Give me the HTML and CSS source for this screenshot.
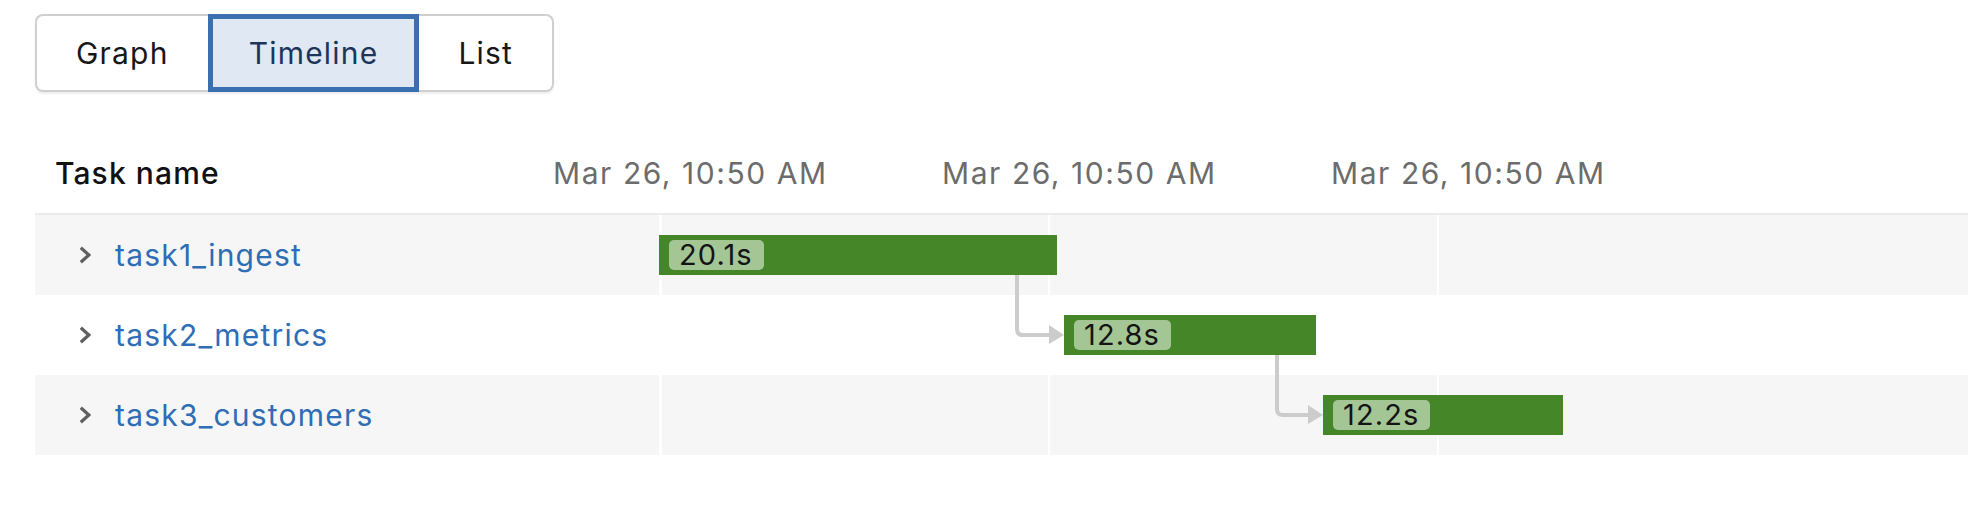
FILE: index.html
```html
<!DOCTYPE html>
<html lang="en">
<head>
<meta charset="utf-8">
<title>Timeline</title>
<link rel="stylesheet" href="styles.css">
</head>
<body>
<div class="page">
  <div class="tabs">
    <button class="tab">Graph</button>
    <button class="tab active">Timeline</button>
    <button class="tab">List</button>
  </div>

  <div class="gantt">
    <div class="gantt-head">
      <div class="head-name">Task name</div>
      <div class="tick">Mar 26, 10:50 AM</div>
      <div class="tick">Mar 26, 10:50 AM</div>
      <div class="tick">Mar 26, 10:50 AM</div>
    </div>

    <div class="gantt-body">
      <div class="row alt">
        <div class="name-cell">
          <svg class="chev" viewBox="0 0 12 18" width="12" height="18"><path d="M1.8 1.8 L9.8 9 L1.8 16.2"/></svg>
          <a class="task-link" href="#">task1_ingest</a>
        </div>
        <div class="track">
          <div class="cell"></div><div class="cell"></div><div class="cell"></div>
          <div class="bar" style="left:0px;width:398px"><span class="badge">20.1s</span></div>
        </div>
      </div>
      <div class="row">
        <div class="name-cell">
          <svg class="chev" viewBox="0 0 12 18" width="12" height="18"><path d="M1.8 1.8 L9.8 9 L1.8 16.2"/></svg>
          <a class="task-link" href="#">task2_metrics</a>
        </div>
        <div class="track">
          <div class="cell"></div><div class="cell"></div><div class="cell"></div>
          <div class="bar" style="left:405px;width:252px"><span class="badge">12.8s</span></div>
        </div>
      </div>
      <div class="row alt">
        <div class="name-cell">
          <svg class="chev" viewBox="0 0 12 18" width="12" height="18"><path d="M1.8 1.8 L9.8 9 L1.8 16.2"/></svg>
          <a class="task-link" href="#">task3_customers</a>
        </div>
        <div class="track">
          <div class="cell"></div><div class="cell"></div><div class="cell"></div>
          <div class="bar" style="left:664px;width:240px"><span class="badge">12.2s</span></div>
        </div>
      </div>

      <svg class="links" width="700" height="240" viewBox="0 0 700 240">
        <path class="link" d="M358 60 V114 Q358 120 364 120 H391"/>
        <polygon class="arrow" points="390,110 405,120 390,129"/>
        <path class="link" d="M618 140 V194 Q618 200 624 200 H650"/>
        <polygon class="arrow" points="649,190 664,200 649,209"/>
      </svg>
    </div>
  </div>
</div>
</body>
</html>
```

FILE: styles.css
```css
* {
  box-sizing: border-box;
}

body {
  margin: 0;
  background: #ffffff;
  font-family: Inter, "Noto Sans", "Liberation Sans", sans-serif;
  color: #161616;
  overflow: hidden;
}

.page {
  padding: 14px 0 0 35px;
}

/* ---------- segmented tabs ---------- */
.tabs {
  display: flex;
  width: max-content;
  height: 78px;
  border-radius: 8px;
  box-shadow: 0 2px 2px rgba(0, 0, 0, 0.07);
}

.tab {
  font: inherit;
  font-size: 30px;
  letter-spacing: 1.2px;
  height: 78px;
  padding: 0 39px;
  margin: 0;
  background: #ffffff;
  color: #171717;
  border-top: 2px solid #cfcfcf;
  border-bottom: 2px solid #cfcfcf;
  border-left: none;
  border-right: none;
  cursor: pointer;
}

.tab:first-child {
  border-left: 2px solid #cfcfcf;
  border-radius: 8px 0 0 8px;
}

.tab:last-child {
  border-right: 2px solid #cfcfcf;
  border-radius: 0 8px 8px 0;
}

.tab.active {
  border: 5px solid #3a70b0;
  background: #dfe8f3;
  color: #1b365a;
  padding: 0 36px;
}

/* ---------- gantt ---------- */
.gantt {
  font-size: 30px;
  letter-spacing: 1.2px;
}

.gantt-head {
  display: flex;
  padding-top: 63px;
  padding-bottom: 22px;
  line-height: 36px;
  border-bottom: 2px solid #ebebeb;
  white-space: nowrap;
}

.head-name {
  flex: none;
  width: 518px;
  padding-left: 20px;
  font-weight: 500;
  letter-spacing: 1.1px;
  color: #111111;
}

.tick {
  flex: none;
  width: 389px;
  color: #6c6c6c;
  letter-spacing: 1.55px;
}

.gantt-body {
  position: relative;
}

.row {
  display: flex;
  height: 80px;
  background: #ffffff;
}

.row.alt {
  background: #f6f6f6;
}

.name-cell {
  flex: none;
  width: 624px;
  display: flex;
  align-items: center;
  padding-left: 44px;
  gap: 24px;
}

.chev {
  flex: none;
}

.chev path {
  fill: none;
  stroke: #5f5f5f;
  stroke-width: 3.2;
  stroke-linecap: butt;
  stroke-linejoin: miter;
}

.task-link {
  color: #2f6db4;
  text-decoration: none;
  line-height: 36px;
}

.track {
  flex: 1;
  position: relative;
  display: flex;
  overflow: hidden;
}

.cell {
  flex: none;
  width: 389px;
  border-left: 2px solid #ffffff;
}

.cell:first-child {
  border-left-width: 3px;
}

.cell:last-of-type {
  flex: 1;
}

.bar {
  position: absolute;
  top: 20px;
  height: 40px;
  background: #458628;
  display: flex;
  align-items: center;
  padding-left: 10px;
}

.badge {
  display: block;
  height: 30px;
  line-height: 30px;
  padding: 0 11px 0 10px;
  border-radius: 5px;
  background: #a3c694;
  color: #141414;
  font-size: 29px;
  letter-spacing: 1.1px;
}

.links {
  position: absolute;
  left: 624px;
  top: 0;
  pointer-events: none;
}

.link {
  fill: none;
  stroke: #cccccc;
  stroke-width: 4;
}

.arrow {
  fill: #cccccc;
}
```
